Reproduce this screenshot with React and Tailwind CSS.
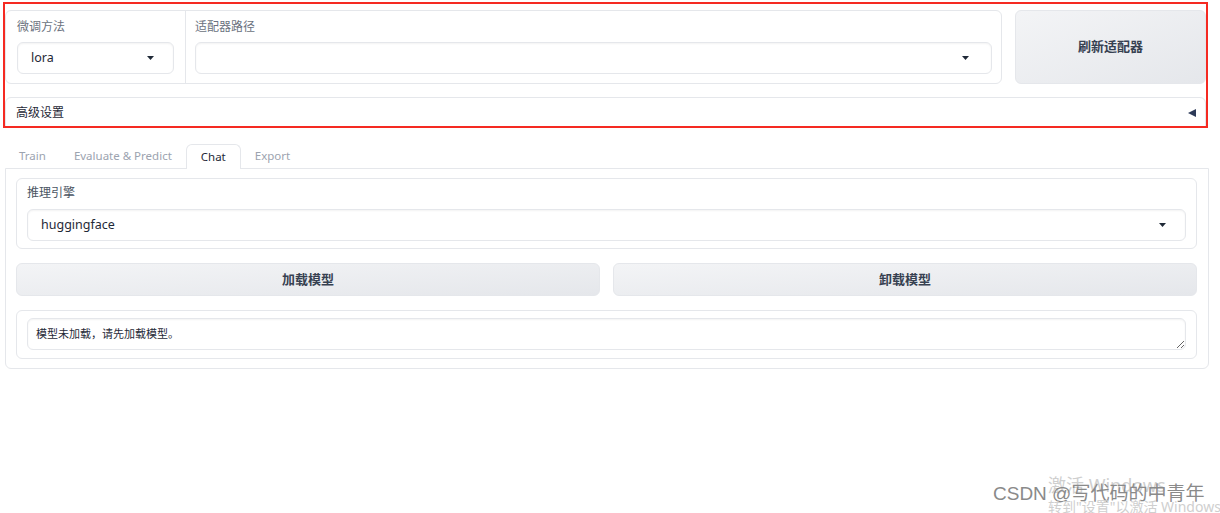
import React from 'react';

function Caret() {
  return (
    <svg width="7" height="4" viewBox="0 0 7 4" className="shrink-0">
      <polygon points="0,0 7,0 3.5,4" fill="#1f2937" />
    </svg>
  );
}

function Select({ value, className = '' }) {
  return (
    <div className={`h-[32px] flex items-center justify-between pl-[13px] pr-[19px] rounded-[6px] border border-[#e5e7eb] bg-white shadow-[inset_0_1px_2px_rgba(0,0,0,0.05)] ${className}`}>
      <span className="text-[12.5px] text-[#1f2937]">{value}</span>
      <Caret />
    </div>
  );
}

function GrayButton({ children, className = '' }) {
  return (
    <div className={`flex items-center justify-center rounded-[6px] border border-[#e5e7eb] bg-gradient-to-br from-[#f3f4f6] to-[#e5e7eb] text-[13px] font-bold text-[#374151] ${className}`}>
      {children}
    </div>
  );
}

export default function App() {
  const tabs = ['Train', 'Evaluate & Predict', 'Chat', 'Export'];

  return (
    <div className="relative w-[1220px] h-[513px] overflow-hidden bg-white pl-[3px] pt-[2px] font-['Noto_Sans','Noto_Sans_CJK_SC',sans-serif]">
      {/* 顶部区域 (红框标注) */}
      <div className="w-[1205px] h-[126px] overflow-hidden border-2 border-[#f52a22] pt-[6px]">
        <div className="flex gap-[13px]">
          <div className="w-[997px] h-[74px] flex rounded-[6px] border border-[#e5e7eb]">
            <div className="w-[180px] border-r border-[#e5e7eb] px-[11px] pt-[8px]">
              <div className="text-[12px] leading-[16px] text-[#6b7280]">微调方法</div>
              <Select value="lora" className="mt-[7px]" />
            </div>
            <div className="flex-1 pl-[9px] pr-[9px] pt-[8px]">
              <div className="text-[12px] leading-[16px] text-[#6b7280]">适配器路径</div>
              <Select value="" className="mt-[7px] pr-[22px]" />
            </div>
          </div>
          <GrayButton className="w-[191px] h-[74px]">刷新适配器</GrayButton>
        </div>
        <div className="mt-[13px] h-[40px] flex items-start justify-between rounded-[6px] border border-[#e5e7eb] pl-[10px] pr-[9px] pt-[7px]">
          <span className="text-[12px] leading-[16px] text-[#1f2937]">高级设置</span>
          <svg width="8" height="8" viewBox="0 0 8 8" className="mt-[4px]">
            <polygon points="8,0 8,8 0,4" fill="#2d3a58" />
          </svg>
        </div>
      </div>

      {/* 标签页 */}
      <div className="mt-[16px] ml-[2px] flex items-end h-[24px]">
        {tabs.map((t) => (
          <div
            key={t}
            className={`relative h-[24px] px-[14px] flex items-center text-[11.5px] ${
              t === 'Chat'
                ? 'z-10 -mb-px h-[25px] rounded-t-[6px] border border-b-0 border-[#e5e7eb] bg-white text-[#1f2937]'
                : 'text-[#9ca3af]'
            }`}
          >
            {t}
          </div>
        ))}
      </div>

      {/* 标签页内容 */}
      <div className="ml-[2px] w-[1204px] h-[201px] rounded-b-[6px] border border-[#e5e7eb] pl-[10px] pr-[11px] pt-[9px]">
        <div className="h-[71px] rounded-[6px] border border-[#e5e7eb] px-[10px] pt-[6px]">
          <div className="text-[12px] leading-[16px] text-[#4b5563]">推理引擎</div>
          <Select value="huggingface" className="mt-[8px]" />
        </div>

        <div className="mt-[14px] flex gap-[13px]">
          <GrayButton className="flex-1 h-[33px]">加载模型</GrayButton>
          <GrayButton className="flex-1 h-[33px]">卸载模型</GrayButton>
        </div>

        <div className="mt-[14px] h-[49px] rounded-[6px] border border-[#e5e7eb] px-[10px] pt-[7px]">
          <textarea
            readOnly
            value="模型未加载，请先加载模型。"
            className="block w-full h-[32px] resize-y rounded-[6px] border border-[#e5e7eb] bg-white px-[8px] py-[7px] text-[11px] leading-[16px] text-[#1f2937] outline-none shadow-[inset_0_1px_2px_rgba(0,0,0,0.05)]"
          />
        </div>
      </div>

      {/* 系统水印 */}
      <div className="absolute left-[1048px] top-[474px] text-[18px] leading-[22px] text-[#cfcfcf]">激活 Windows</div>
      <div className="absolute left-[993px] top-[483px] text-[19px] leading-[22px] text-[#8a8a8a] whitespace-nowrap font-['Liberation_Sans','Noto_Sans_CJK_SC',sans-serif]">CSDN @写代码的中青年</div>
      <div className="absolute left-[1048px] top-[498px] text-[14px] leading-[18px] text-[#cfcfcf] whitespace-nowrap">转到"设置"以激活 Windows</div>
    </div>
  );
}
